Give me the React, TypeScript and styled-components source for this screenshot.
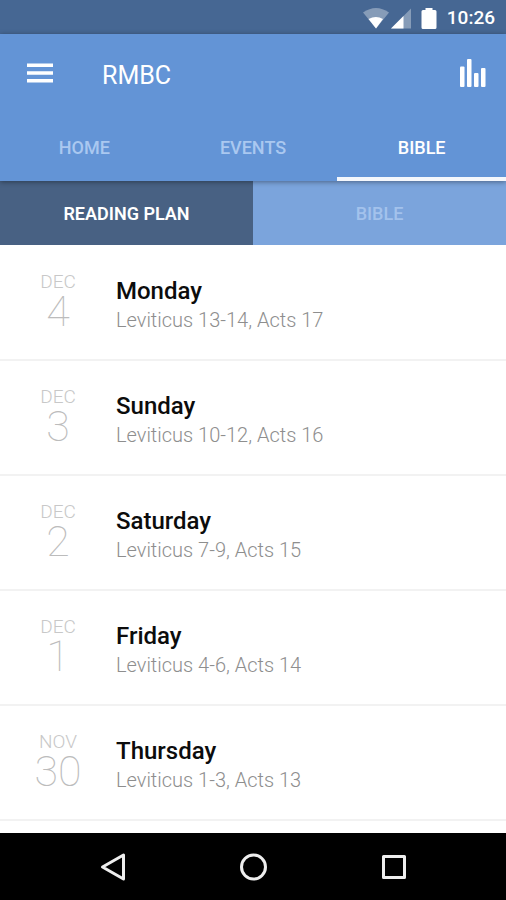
import React from "react";
import styled, { createGlobalStyle } from "styled-components";

const GlobalStyle = createGlobalStyle`
  *, *::before, *::after { box-sizing: border-box; }
  body { margin: 0; background: #fff; font-family: Roboto, "Noto Sans", sans-serif; }
  button { border: 0; padding: 0; background: none; color: inherit; font: inherit; cursor: pointer; }
`;

const Screen = styled.div`
  display: flex;
  flex-direction: column;
  min-height: 100vh;
`;

const StatusBar = styled.div`
  display: flex;
  align-items: center;
  justify-content: flex-end;
  height: 34px;
  padding: 2px 11px 0 0;
  background: #466793;
  color: #fff;
`;

const StatusIcons = styled.svg`
  width: 78px;
  height: 24px;
  margin-right: 6px;
`;

const Clock = styled.time`
  font-size: 19px;
  font-weight: 500;
  line-height: 24px;
`;

const Header = styled.header`
  position: relative;
  background: #6394d6;
  color: #fff;
  box-shadow: 0 1px 5px rgba(0, 0, 0, 0.4);
`;

const Toolbar = styled.div`
  display: flex;
  align-items: center;
  height: 80px;
  padding: 0 17px 0 24px;
`;

const IconButton = styled.button`
  display: grid;
  place-items: center;
  width: 32px;
  height: 40px;

  svg { display: block; }
`;

const Title = styled.h1`
  flex: 1;
  margin: 0;
  padding: 3px 0 0 46px;
  font-size: 25px;
  font-weight: 400;
  line-height: 32px;
`;

const Tabs = styled.nav`
  display: flex;
`;

const Tab = styled.button<{ $active?: boolean }>`
  flex: 1;
  height: 67px;
  padding-top: 3px;
  border-bottom: 4px solid ${(p) => (p.$active ? "#f4f7fc" : "transparent")};
  color: ${(p) => (p.$active ? "#fff" : "#aac8f0")};
  font-size: 18px;
  font-weight: 500;
`;

const SubTabs = styled.div`
  display: flex;
`;

const SubTab = styled.button<{ $active?: boolean }>`
  flex: 1;
  height: 64px;
  background: ${(p) => (p.$active ? "#486183" : "#7ba4dc")};
  color: ${(p) => (p.$active ? "#fff" : "#a3c2ec")};
  font-size: 18px;
  font-weight: ${(p) => (p.$active ? 600 : 500)};
`;

const List = styled.ul`
  flex: 1;
  margin: 0;
  padding: 1px 0 0;
  list-style: none;
`;

const Row = styled.li`
  display: flex;
  align-items: center;
  height: 115px;
  border-bottom: 2px solid #f2f2f2;
`;

const DateBlock = styled.div`
  width: 116px;
  padding-bottom: 3px;
  color: #c8c8c8;
  text-align: center;
`;

const Month = styled.div`
  font-size: 19px;
  font-weight: 300;
  line-height: 20px;
`;

const Day = styled.div`
  font-size: 43px;
  font-weight: 100;
  line-height: 38px;
  color: #bcbcbc;
`;

const Reading = styled.div`
  padding-top: 2px;
`;

const Weekday = styled.h2`
  margin: 0;
  color: #0c0c0c;
  font-size: 24px;
  font-weight: 500;
  line-height: 32px;
`;

const Passage = styled.p`
  margin: 0;
  color: #8e8e8e;
  font-size: 20px;
  font-weight: 350;
  line-height: 26px;
`;

const SystemNav = styled.nav`
  display: flex;
  justify-content: center;
  gap: 109px;
  height: 67px;
  background: #000;
`;

const SystemButton = styled(IconButton)`
  height: 67px;
`;

const readings = [
  { month: "DEC", day: 4, weekday: "Monday", passage: "Leviticus 13-14, Acts 17" },
  { month: "DEC", day: 3, weekday: "Sunday", passage: "Leviticus 10-12, Acts 16" },
  { month: "DEC", day: 2, weekday: "Saturday", passage: "Leviticus 7-9, Acts 15" },
  { month: "DEC", day: 1, weekday: "Friday", passage: "Leviticus 4-6, Acts 14" },
  { month: "NOV", day: 30, weekday: "Thursday", passage: "Leviticus 1-3, Acts 13" },
];

export default function App() {
  return (
    <Screen>
      <GlobalStyle />
      <StatusBar>
        <StatusIcons viewBox="0 0 78 24" fill="#fff" aria-hidden="true">
          <path d="M0 6.500Q13 -2.500 26 6.500L13 22.500Z" opacity=".35" />
          <path d="M5.500 13Q13 9 20 13L13 22.500Z" />
          <path d="M28 22.500L48 2.500V22.500Z" opacity=".35" />
          <path d="M28 22.500L40.500 10V22.500Z" />
          <path d="M62.500 2h7v2h2.500q1.500 0 1.500 1.500v16q0 1.500-1.500 1.500h-12q-1.500 0-1.500-1.500v-16q0-1.500 1.500-1.500h2.500z" />
        </StatusIcons>
        <Clock>10:26</Clock>
      </StatusBar>
      <Header>
        <Toolbar>
          <IconButton aria-label="Menu">
            <svg width="28" height="22" viewBox="0 0 28 22" fill="#fff">
              <path d="M1 .5h26v3.500H1zM1 8.200h26v3.500H1zM1 16h26v3.500H1z" />
            </svg>
          </IconButton>
          <Title>RMBC</Title>
          <IconButton aria-label="Statistics">
            <svg width="28" height="30" viewBox="0 0 28 30" fill="#fff">
              <rect x="1" y="7.500" width="4.500" height="20.500" rx="1" />
              <rect x="8" y="0" width="4.500" height="28" rx="1" />
              <rect x="15" y="14" width="4.500" height="14" rx="1" />
              <rect x="22" y="9" width="4.500" height="19" rx="1" />
            </svg>
          </IconButton>
        </Toolbar>
        <Tabs>
          <Tab>HOME</Tab>
          <Tab>EVENTS</Tab>
          <Tab $active aria-current="page">BIBLE</Tab>
        </Tabs>
      </Header>
      <SubTabs>
        <SubTab $active aria-pressed="true">READING PLAN</SubTab>
        <SubTab aria-pressed="false">BIBLE</SubTab>
      </SubTabs>
      <List>
        {readings.map((r) => (
          <Row key={r.weekday}>
            <DateBlock>
              <Month>{r.month}</Month>
              <Day>{r.day}</Day>
            </DateBlock>
            <Reading>
              <Weekday>{r.weekday}</Weekday>
              <Passage>{r.passage}</Passage>
            </Reading>
          </Row>
        ))}
      </List>
      <SystemNav aria-label="System">
        <SystemButton aria-label="Back">
          <svg width="28" height="30" viewBox="0 0 28 30" fill="none" stroke="#eee" strokeWidth="3" strokeLinejoin="round">
            <path d="M25.500 3V27L4.500 15Z" />
          </svg>
        </SystemButton>
        <SystemButton aria-label="Home">
          <svg width="28" height="28" viewBox="0 0 28 28" fill="none" stroke="#eee" strokeWidth="3">
            <circle cx="14.500" cy="14" r="12" />
          </svg>
        </SystemButton>
        <SystemButton aria-label="Recent apps">
          <svg width="26" height="26" viewBox="0 0 26 26" fill="none" stroke="#eee" strokeWidth="3" strokeLinejoin="round">
            <rect x="2.500" y="2.500" width="21" height="21" />
          </svg>
        </SystemButton>
      </SystemNav>
    </Screen>
  );
}
